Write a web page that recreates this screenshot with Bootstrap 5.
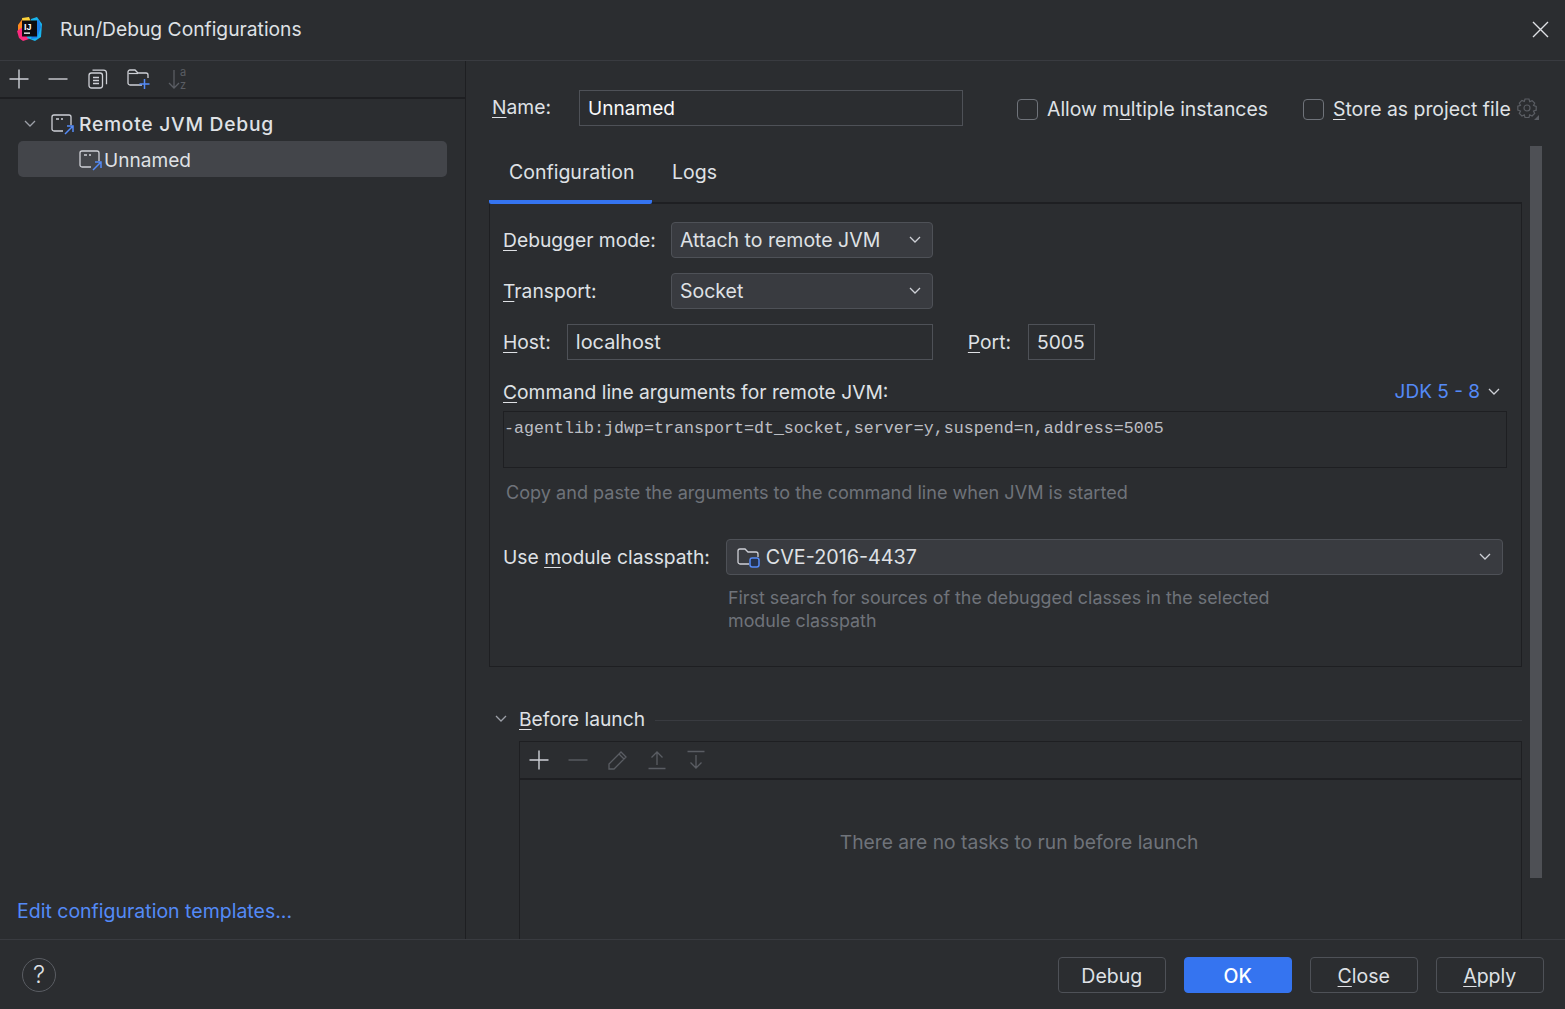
<!DOCTYPE html>
<html lang="en">
<head>
<meta charset="utf-8">
<title>Run/Debug Configurations</title>
<link href="https://cdn.jsdelivr.net/npm/bootstrap@5.3.0/dist/css/bootstrap.min.css" rel="stylesheet">
<style>
html,body{height:100%}
body.dlg{background:#2b2d30;color:#dfe1e5;font-family:Inter,"Liberation Sans",sans-serif;font-size:19.25px;line-height:24px;overflow:hidden;height:1009px}
u{text-underline-offset:3px;text-decoration-thickness:1px}
svg{display:block;flex:none}
.ttl{height:61px;border-bottom:1px solid #393b40;padding:0 0 2px 17px}
.ttl-t{margin-left:18px}
.close-x{position:absolute;right:16px;top:21px}
.mid{height:878px}
.side{width:466px;border-right:1px solid #1e1f22}
.tbar{height:38px;border-bottom:2px solid #1e1f22;padding-left:9px;gap:19.300px}
.sort-i{margin-left:-2px}
.tree{padding-top:6px}
.tree-r{height:36px;padding:2px 0 0 18px}
.tree-b{font-weight:500;letter-spacing:.74px;margin-left:5px}
.tree-s{background:#43454a;border-radius:5px;margin:0 18px;padding-left:61px}
.tree-u{margin-left:2px;font-size:19.1px}
.chev{margin:0 15px 0 6px}
.lnk{color:#548af7;text-decoration:none;font-size:19.5px}
.lnk-j{font-size:19px}
.tpl{padding:0 0 16px 17px}
.main-p{padding:29px 0 0 26px}
.nm-lb{width:64px;padding-bottom:2px}
.nm-in{width:384px;margin-left:23px;font-size:19.1px;padding-bottom:2px}
.fld{height:36px;border:1px solid #4e5157;background:#2b2d30;padding-left:8px;padding-right:8px;display:flex;align-items:center}
.chk{width:21px;height:21px;border:1px solid #6f737a;border-radius:4px;margin-right:9px}
.chks{gap:35px;margin-left:54px;padding-top:2px;white-space:nowrap;font-size:19.4px}
.gear{margin-left:5px}
.tabs{margin:20px 0 0 -3px;width:1033px;height:58px;border-bottom:2px solid #1e1f22;font-size:19.5px}
.tab-a{width:163px;height:58px;padding:14px 0 0 20px;border-bottom:4px solid #3574f0;border-radius:0 0 2px 2px;margin-bottom:-2px}
.tab-b{padding:14px 0 0 20px}
.panel{margin-left:-3px;width:1033px;height:463px;border:1px solid #1e1f22;border-top:0;padding:18px 14px 0 13px}
.sel{height:36px;background:#393b40;border:1px solid #4e5157;border-radius:4px;padding:0 11px 0 8px;display:flex;align-items:center;justify-content:space-between;font-size:19.5px}
.sel-s{width:262px;margin-left:15px}
.lb1{width:153px}
.r2{margin-top:15px}
.host{width:366px;margin-left:16px;font-size:19.9px}
.port{width:67px;margin-left:17px}
.port-l{margin-left:35px}
.cmdh{margin-top:20px;padding-right:7px}
.cmd{width:1004px;height:57px;border:1px solid #1e1f22;margin-top:7px;font-family:"Liberation Mono",monospace;font-size:16.67px;line-height:20px;color:#bcbec4;padding-top:7px;white-space:pre}
.hint{color:#6f737a}
.hint1{margin:12px 0 0 3px;font-size:18.1px}
.mod{margin-top:35px}
.mod-sel{width:777px;margin-left:16px;padding-left:9px}
.mod-n{font-size:19.75px}
.mod-g{gap:6px}
.mod-hint{margin:11px 0 0 225px;line-height:23px;font-size:17.85px}
.bl-h{margin-top:40px;margin-left:-3px;height:24px}
.bl-line{height:1px;background:#393b40;margin-left:10px;margin-top:2px;width:867px}
.bl-chev{margin:0 12px 0 6px}
.bl-box{margin:10px 0 0 27px;width:1003px;height:200px;border:1px solid #1e1f22;border-bottom:0}
.bl-t{height:38px;border-bottom:2px solid #1e1f22;padding-left:9px;gap:19.300px}
.bl-e{margin-top:50px;padding-right:3px}
.thumb{position:absolute;left:1530px;top:146px;width:12px;height:732px;background:#4e5055}
.foot{height:70px;border-top:1px solid #393b40;padding:0 21.500px 0 22px}
.help{width:34px;height:34px;border:1px solid #5a5d63;border-radius:50%;font-size:24px;color:#dfe1e5;font-weight:300}
.fbtn{width:107.500px;height:36px;border:1px solid #4e5157;border-radius:4px;background:transparent;color:#dfe1e5;font-size:19.5px;padding:2px 0 0;line-height:24px}
.fbtn:hover{background:transparent;color:#dfe1e5;border-color:#4e5157}
.fbtn-p{background:#3574f0;border-color:#3574f0;color:#fff;font-weight:500}
.fbtn-p:hover{background:#3574f0;color:#fff;border-color:#3574f0}
.fbtns{gap:18.500px}
</style>
</head>
<body class="dlg d-flex flex-column position-relative">
<header class="ttl d-flex align-items-center">
  <svg width="25" height="25" viewBox="0 0 25 25">
    <polygon points="1,8 6,1 13,3 10,13 5,23 1,15" fill="#ff8a1f"/>
    <polygon points="5,1 12,0 14,5 6,7" fill="#fcd33a"/>
    <polygon points="0,14 6,10 12,22 6,24 2,21" fill="#fc2a7e"/>
    <polygon points="14,2 20,0 25,7 24,20 18,24 10,21" fill="#18b5ee"/>
    <polygon points="18,4 22,3 24,10 20,21 14,22" fill="#1c7ee8"/>
    <rect x="5" y="3.500" width="15" height="16" fill="#0c0c10"/>
    <text x="7" y="12.500" font-family="Liberation Sans" font-weight="700" font-size="9" fill="#fff">IJ</text>
    <rect x="7" y="15.500" width="6" height="1.300" fill="#fff"/>
  </svg>
  <div class="ttl-t">Run/Debug Configurations</div>
  <svg class="close-x" width="17" height="17" viewBox="0 0 17 17"><path d="M1 1l15 15M16 1L1 16" stroke="#dfe1e5" stroke-width="1.4" fill="none"/></svg>
</header>

<div class="mid d-flex">
  <aside class="side d-flex flex-column">
    <div class="tbar d-flex align-items-center">
      <svg width="20" height="20" viewBox="0 0 20 20"><path d="M10 0.500v19M0.500 10h19" stroke="#ced0d6" stroke-width="1.4" fill="none"/></svg>
      <svg width="20" height="20" viewBox="0 0 20 20"><path d="M0.500 10h19" stroke="#ced0d6" stroke-width="1.4" fill="none"/></svg>
      <svg width="20" height="20" viewBox="0 0 20 20" fill="none" stroke="#ced0d6" stroke-width="1.3"><rect x="1" y="4" width="13.500" height="15" rx="2.500"/><path d="M4.500 1.200h11a3 3 0 0 1 3 3v11M5 8.500h6M5 11.500h6M5 14.500h6"/></svg>
      <svg width="24" height="22" viewBox="0 0 24 22" fill="none"><path d="M15 17H3a2 2 0 0 1-2-2V4a2 2 0 0 1 2-2h5l3 3h8a2 2 0 0 1 2 2v3" stroke="#ced0d6" stroke-width="1.3"/><path d="M1.500 5.500h9.500" stroke="#ced0d6" stroke-width="1.2"/><path d="M17.500 11v10M12.500 16h10" stroke="#548af7" stroke-width="1.5"/></svg>
      <svg class="sort-i" width="22" height="26" viewBox="0 0 22 26" fill="none" stroke="#5a5d63" stroke-width="1.3"><path d="M6 4v18M1 17L6 22l5-5"/><text x="12" y="10" font-family="Inter" font-size="11" fill="#5a5d63" stroke="none">a</text><text x="12" y="23" font-family="Inter" font-size="11" fill="#5a5d63" stroke="none">z</text></svg>
    </div>
    <div class="tree flex-grow-1">
      <div class="tree-r d-flex align-items-center">
        <svg class="chev" width="12" height="8" viewBox="0 0 12 8"><path d="M1 1l5 5 5-5" stroke="#9da0a8" stroke-width="1.3" fill="none"/></svg>
        <svg width="23" height="21" viewBox="0 0 23 21" fill="none"><path d="M12 17H3a2 2 0 0 1-2-2V3a2 2 0 0 1 2-2h15a2 2 0 0 1 2 2v8" stroke="#ced0d6" stroke-width="1.3"/><path d="M5 5h3M10 5h2" stroke="#ced0d6" stroke-width="1.3"/><path d="M14 20l8-8M16 12h6v6" stroke="#548af7" stroke-width="1.5"/></svg>
        <span class="tree-b">Remote JVM Debug</span>
      </div>
      <div class="tree-r tree-s d-flex align-items-center">
        <svg width="23" height="21" viewBox="0 0 23 21" fill="none"><path d="M12 17H3a2 2 0 0 1-2-2V3a2 2 0 0 1 2-2h15a2 2 0 0 1 2 2v8" stroke="#ced0d6" stroke-width="1.3"/><path d="M5 5h3M10 5h2" stroke="#ced0d6" stroke-width="1.3"/><path d="M14 20l8-8M16 12h6v6" stroke="#548af7" stroke-width="1.5"/></svg>
        <span class="tree-u">Unnamed</span>
      </div>
    </div>
    <div class="tpl"><a class="lnk" href="#">Edit configuration templates...</a></div>
  </aside>

  <section class="main-p flex-grow-1 overflow-hidden">
    <div class="d-flex align-items-center">
      <label class="nm-lb m-0" for="nm"><u>N</u>ame:</label>
      <input id="nm" class="fld nm-in text-light" value="Unnamed">
      <div class="chks d-flex align-items-center">
        <div class="d-flex align-items-center"><span class="chk d-block"></span><span>Allow m<u>u</u>ltiple instances</span></div>
        <div class="d-flex align-items-center"><span class="chk d-block"></span><span><u>S</u>tore as project file</span>
          <svg class="gear" width="24" height="24" viewBox="0 0 24 24" fill="none" stroke="#5a5d63" stroke-width="1.2"><circle cx="11" cy="11" r="3"/><path d="M9 2h4l.7 2.600 2.400-1 2.600 2.600-1.200 2.300 2.700.9v3.800l-2.700.8 1.200 2.400-2.600 2.600-2.400-1.100-.7 2.600H9l-.7-2.600-2.400 1.100-2.600-2.600 1.200-2.400L1.800 13v-3.800l2.700-.9-1.200-2.300 2.600-2.600 2.400 1z"/><path d="M23 18v5h-5z" fill="#5a5d63" stroke="none"/></svg>
        </div>
      </div>
    </div>

    <nav class="tabs d-flex">
      <div class="tab-a">Configuration</div>
      <div class="tab-b">Logs</div>
    </nav>

    <div class="panel">
      <div class="d-flex align-items-center">
        <div class="lb1 text-nowrap"><u>D</u>ebugger mode:</div>
        <div class="sel sel-s"><span>Attach to remote JVM</span><svg width="12" height="8" viewBox="0 0 12 8"><path d="M1 1l5 5 5-5" stroke="#ced0d6" stroke-width="1.3" fill="none"/></svg></div>
      </div>
      <div class="d-flex align-items-center r2">
        <div class="lb1"><u>T</u>ransport:</div>
        <div class="sel sel-s"><span>Socket</span><svg width="12" height="8" viewBox="0 0 12 8"><path d="M1 1l5 5 5-5" stroke="#ced0d6" stroke-width="1.3" fill="none"/></svg></div>
      </div>
      <div class="d-flex align-items-center r2">
        <div><u>H</u>ost:</div>
        <div class="fld host">localhost</div>
        <div class="port-l"><u>P</u>ort:</div>
        <div class="fld port">5005</div>
      </div>
      <div class="d-flex justify-content-between align-items-center cmdh">
        <div><u>C</u>ommand line arguments for remote JVM:</div>
        <div class="d-flex align-items-center gap-2"><a class="lnk lnk-j" href="#">JDK 5 - 8</a><svg width="12" height="8" viewBox="0 0 12 8"><path d="M1 1l5 5 5-5" stroke="#ced0d6" stroke-width="1.3" fill="none"/></svg></div>
      </div>
      <div class="cmd">-agentlib:jdwp=transport=dt_socket,server=y,suspend=n,address=5005</div>
      <div class="hint hint1">Copy and paste the arguments to the command line when JVM is started</div>
      <div class="d-flex align-items-center mod">
        <div class="text-nowrap">Use <u>m</u>odule classpath:</div>
        <div class="sel mod-sel">
          <div class="d-flex align-items-center mod-g">
            <svg width="24" height="22" viewBox="0 0 24 22" fill="none"><path d="M13 18H4a2 2 0 0 1-2-2V5a2 2 0 0 1 2-2h5l3 3h8a2 2 0 0 1 2 2v3" stroke="#ced0d6" stroke-width="1.3"/><rect x="14" y="12" width="9" height="9" rx="2.200" fill="#25324d" stroke="#548af7" stroke-width="1.5"/></svg>
            <span class="mod-n">CVE-2016-4437</span>
          </div>
          <svg width="12" height="8" viewBox="0 0 12 8"><path d="M1 1l5 5 5-5" stroke="#ced0d6" stroke-width="1.3" fill="none"/></svg>
        </div>
      </div>
      <div class="hint mod-hint">First search for sources of the debugged classes in the selected<br>module classpath</div>
    </div>

    <div class="bl-h d-flex align-items-center">
      <svg class="bl-chev" width="12" height="8" viewBox="0 0 12 8"><path d="M1 1l5 5 5-5" stroke="#9da0a8" stroke-width="1.3" fill="none"/></svg>
      <span><u>B</u>efore launch</span>
      <div class="bl-line"></div>
    </div>
    <div class="bl-box">
      <div class="bl-t d-flex align-items-center">
        <svg width="20" height="20" viewBox="0 0 20 20"><path d="M10 0.500v19M0.500 10h19" stroke="#ced0d6" stroke-width="1.4" fill="none"/></svg>
        <svg width="20" height="20" viewBox="0 0 20 20"><path d="M0.500 10h19" stroke="#5a5d63" stroke-width="1.4" fill="none"/></svg>
        <svg width="20" height="20" viewBox="0 0 20 20" fill="none" stroke="#5a5d63" stroke-width="1.3"><path d="M1 19v-5L13 2l5 5L6 19zM11 4l5 5"/></svg>
        <svg width="20" height="20" viewBox="0 0 20 20" fill="none" stroke="#5a5d63" stroke-width="1.3"><path d="M1.500 18.500h17M10 15V2M4.500 7.500L10 2l5.500 5.500"/></svg>
        <svg width="20" height="20" viewBox="0 0 20 20" fill="none" stroke="#5a5d63" stroke-width="1.3"><path d="M1.500 1.500h17M10 5v13M4.500 12.500L10 18l5.500-5.500"/></svg>
      </div>
      <div class="hint text-center bl-e">There are no tasks to run before launch</div>
    </div>
  </section>
</div>
<div class="thumb"></div>

<footer class="foot d-flex align-items-center justify-content-between">
  <div class="help d-flex align-items-center justify-content-center">?</div>
  <div class="fbtns d-flex">
    <button class="btn fbtn">Debug</button>
    <button class="btn fbtn fbtn-p">OK</button>
    <button class="btn fbtn"><u>C</u>lose</button>
    <button class="btn fbtn"><u>A</u>pply</button>
  </div>
</footer>
</body>
</html>
